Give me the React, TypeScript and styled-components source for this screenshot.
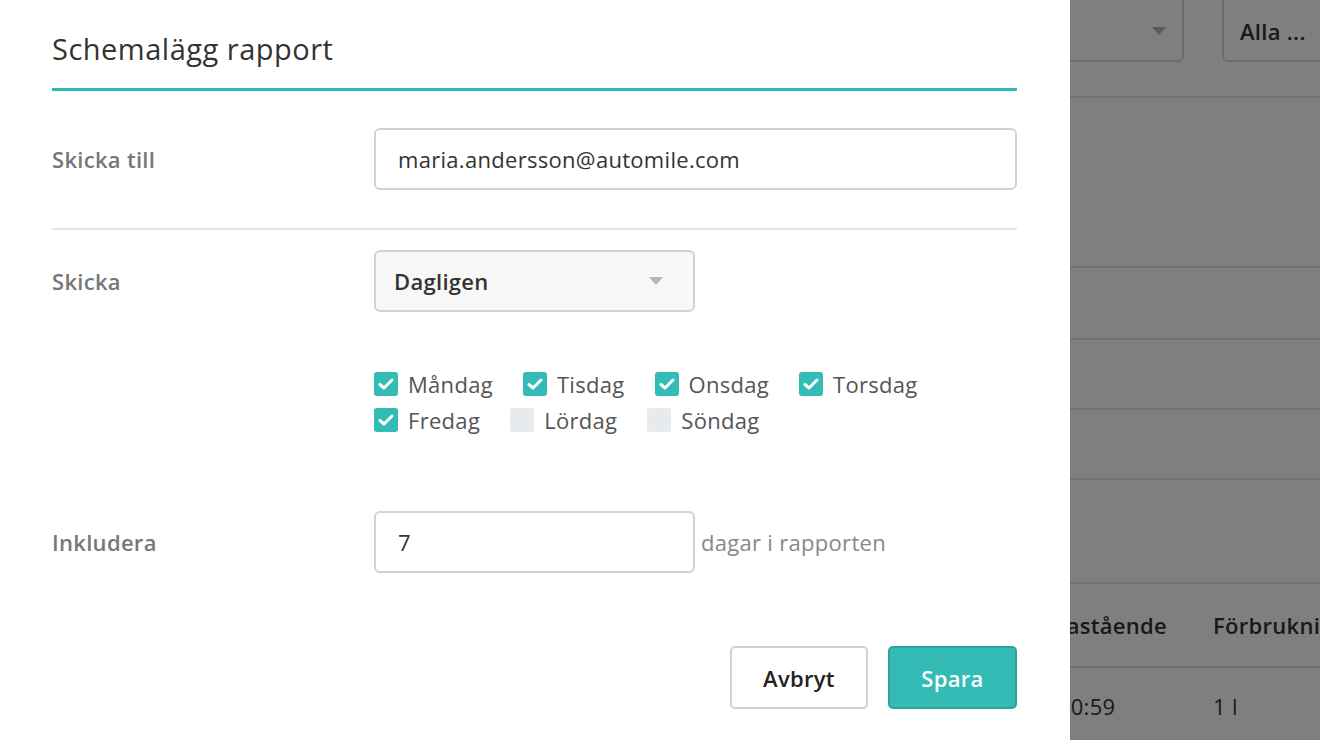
import styled, { createGlobalStyle } from "styled-components";

const GlobalStyle = createGlobalStyle`
  html, body {
    margin: 0;
    padding: 0;
  }
  body {
    font-family: "Open Sans", "Liberation Sans", sans-serif;
    background: #ffffff;
    letter-spacing: 0.3px;
  }
  * {
    box-sizing: border-box;
  }
`;

const Page = styled.div`
  position: relative;
  width: 1320px;
  height: 740px;
  overflow: hidden;
  background: #ffffff;
`;

// the page that sits behind the dimmed backdrop
const Behind = styled.div`
  display: flex;
  flex-direction: column;
  padding-left: 1026px;
  color: #333;
`;

const Toolbar = styled.div`
  display: flex;
  gap: 38px;
  margin-top: -10px;
  height: 108px;
  border-bottom: 2px solid #e2e2e2;
`;

const ToolBox = styled.div<{ $w: number }>`
  flex-shrink: 0;
  width: ${(p) => p.$w}px;
  height: 72px;
  border: 2px solid #d6d6d6;
  border-radius: 6px;
  display: flex;
  align-items: center;
  padding: 10px 16px 0;
  font-size: 22px;
  font-weight: 600;
  justify-content: space-between;
`;

const Caret = styled.span`
  width: 0;
  height: 0;
  border-left: 7px solid transparent;
  border-right: 7px solid transparent;
  border-top: 8px solid #b5b5b5;
`;

const BlankRow = styled.div<{ $h: number }>`
  height: ${(p) => p.$h}px;
  border-bottom: 2px solid #e2e2e2;
`;

const TableRow = styled.div<{ $h: number; $head?: boolean }>`
  display: grid;
  grid-template-columns: 187px 140px;
  align-items: center;
  height: ${(p) => p.$h}px;
  font-size: 22px;
  font-weight: ${(p) => (p.$head ? 600 : 400)};
  border-bottom: ${(p) => (p.$head ? "2px solid #dcdcdc" : "none")};
  white-space: nowrap;
`;

const Backdrop = styled.div`
  position: absolute;
  inset: 0;
  background: rgba(0, 0, 0, 0.5);
`;

const Modal = styled.div`
  position: absolute;
  left: 0;
  top: 0;
  width: 1070px;
  height: 100%;
  background: #ffffff;
  padding: 0 53px 0 52px;
  color: #333;
`;

const Header = styled.div`
  height: 91px;
  display: flex;
  align-items: center;
  padding-top: 8px;
  border-bottom: 3px solid #2cbab5;
`;

const Title = styled.h2`
  margin: 0;
  font-size: 29px;
  font-weight: 400;
  letter-spacing: 0.5px;
  color: #333;
`;

const Section = styled.div<{ $divider?: boolean }>`
  display: grid;
  grid-template-columns: 322px 1fr;
  align-items: start;
  padding: ${(p) => (p.$divider ? "37px 0 38px" : "20px 0 0")};
  border-bottom: ${(p) => (p.$divider ? "2px solid #e5e5e5" : "none")};
`;

const Label = styled.div<{ $offset?: number }>`
  font-size: 22px;
  font-weight: 600;
  color: #777;
  height: 62px;
  display: flex;
  align-items: center;
  margin-top: ${(p) => p.$offset ?? 0}px;
`;

const Field = styled.div`
  display: flex;
  flex-direction: column;
`;

const Input = styled.div<{ $w?: number }>`
  width: ${(p) => (p.$w ? `${p.$w}px` : "100%")};
  height: 62px;
  border: 2px solid #d2d2d2;
  border-radius: 6px;
  background: #fff;
  display: flex;
  align-items: center;
  padding: 0 22px;
  font-size: 22px;
  color: #333;
`;

const Select = styled(Input)`
  background: #f8f8f8;
  font-weight: 600;
  padding: 0 30px 0 18px;
  justify-content: space-between;
`;

const Days = styled.div`
  display: flex;
  flex-wrap: wrap;
  max-width: 580px;
  margin-top: 60px;
  row-gap: 12px;
`;

const Day = styled.label`
  display: flex;
  align-items: center;
  gap: 10px;
  margin-right: 30px;
  font-size: 22px;
  color: #555;
  height: 24px;
`;

const Box = styled.span<{ $on: boolean }>`
  width: 24px;
  height: 24px;
  border-radius: 3px;
  background: ${(p) => (p.$on ? "#35bbb6" : "#e8ebee")};
  display: flex;
  align-items: center;
  justify-content: center;
`;

const IncludeRow = styled.div`
  display: flex;
  align-items: center;
  gap: 6px;
  margin-top: 59px;
`;

const Hint = styled.span`
  font-size: 22px;
  color: #888;
`;

const Footer = styled.div`
  display: flex;
  justify-content: flex-end;
  gap: 20px;
  margin-top: 73px;
`;

const Button = styled.button<{ $primary?: boolean }>`
  height: 63px;
  padding: 0;
  width: ${(p) => (p.$primary ? "129px" : "138px")};
  border-radius: 5px;
  border: 2px solid ${(p) => (p.$primary ? "#2aa49f" : "#d2d2d2")};
  background: ${(p) => (p.$primary ? "#35bbb6" : "#ffffff")};
  color: ${(p) => (p.$primary ? "#ffffff" : "#222")};
  font-family: inherit;
  font-size: 22px;
  font-weight: 600;
  letter-spacing: 0.3px;
  cursor: pointer;
`;

const days = [
  { name: "Måndag", on: true },
  { name: "Tisdag", on: true },
  { name: "Onsdag", on: true },
  { name: "Torsdag", on: true },
  { name: "Fredag", on: true },
  { name: "Lördag", on: false },
  { name: "Söndag", on: false },
];

function Check() {
  return (
    <svg width="16" height="14" viewBox="0 0 16 14">
      <polyline
        points="2,7.5 6,11 14,3"
        fill="none"
        stroke="#fff"
        strokeWidth="3"
        strokeLinecap="round"
        strokeLinejoin="round"
      />
    </svg>
  );
}

export default function App() {
  return (
    <>
      <GlobalStyle />
      <Page>
        <Behind>
          <Toolbar>
            <ToolBox $w={158}>
              <span />
              <Caret />
            </ToolBox>
            <ToolBox $w={140}>Alla ...</ToolBox>
          </Toolbar>
          <BlankRow $h={170} />
          <BlankRow $h={72} />
          <BlankRow $h={70} />
          <BlankRow $h={70} />
          <BlankRow $h={104} />
          <TableRow $h={84} $head>
            <span>Stillastående</span>
            <span>Förbrukning</span>
          </TableRow>
          <TableRow $h={76}>
            <span>00:00:59</span>
            <span>1 l</span>
          </TableRow>
        </Behind>
        <Backdrop />
        <Modal>
          <Header>
            <Title>Schemalägg rapport</Title>
          </Header>
          <Section $divider>
            <Label>Skicka till</Label>
            <Input>maria.andersson@automile.com</Input>
          </Section>
          <Section>
            <Label>Skicka</Label>
            <Field>
              <Select $w={321}>
                <span>Dagligen</span>
                <Caret />
              </Select>
              <Days>
                {days.map((d) => (
                  <Day key={d.name}>
                    <Box $on={d.on}>{d.on && <Check />}</Box>
                    {d.name}
                  </Day>
                ))}
              </Days>
            </Field>
          </Section>
          <Section>
            <Label $offset={59}>Inkludera</Label>
            <Field>
              <IncludeRow>
                <Input $w={321}>7</Input>
                <Hint>dagar i rapporten</Hint>
              </IncludeRow>
            </Field>
          </Section>
          <Footer>
            <Button>Avbryt</Button>
            <Button $primary>Spara</Button>
          </Footer>
        </Modal>
      </Page>
    </>
  );
}
